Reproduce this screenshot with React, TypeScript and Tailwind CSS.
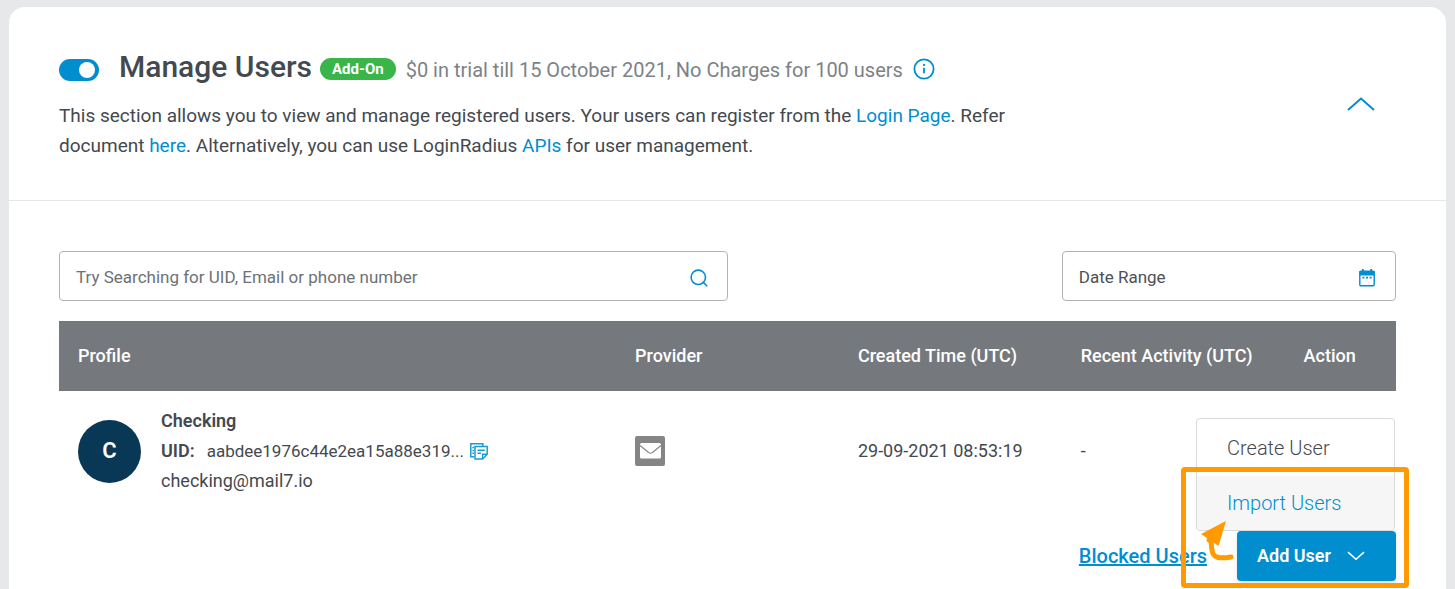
import React from "react";

function InfoIcon() {
  return (
    <svg width="22" height="22" viewBox="0 0 22 22" fill="none" aria-hidden="true">
      <circle cx="11" cy="11" r="9.6" stroke="#008ecf" strokeWidth="1.8" />
      <path d="M11 9.8v5.4" stroke="#008ecf" strokeWidth="1.8" />
      <circle cx="11" cy="6.9" r="1.1" fill="#008ecf" />
    </svg>
  );
}

function SearchIcon() {
  return (
    <svg width="18" height="18" viewBox="0 0 18 18" fill="none" stroke="#008ecf" strokeWidth="1.6" aria-hidden="true">
      <circle cx="8.3" cy="8.3" r="7.2" />
      <path d="M12.8 12.8l4.4 4.4" />
    </svg>
  );
}

function CalendarIcon() {
  return (
    <svg width="16" height="18" viewBox="0 0 16 18" fill="none" aria-hidden="true">
      <rect x="0.8" y="2.3" width="14.4" height="14.4" rx="1" stroke="#008ecf" strokeWidth="1.4" />
      <path d="M0.5 2h15v4.5H.5z" fill="#008ecf" />
      <path d="M3.8 0v3M12.2 0v3" stroke="#008ecf" strokeWidth="1.8" />
      <path d="M3.4 8.7h2M7 8.7h2M10.6 8.7h2" stroke="#008ecf" strokeWidth="1.8" />
    </svg>
  );
}

function CopyIcon() {
  return (
    <svg width="18" height="17" viewBox="0 0 18 17" fill="none" stroke="#1b9cd8" strokeWidth="1.5" aria-hidden="true">
      <path d="M4.5 13.8H.8V.8h12v2.4" />
      <path d="M2.4 4.5h1.6M2.4 7.4h1.6M2.4 10.3h1.6" />
      <path d="M5 3.6h12.2v7.6l-4.6 4.8H5z" />
      <path d="M17 11.2h-4.4V16" />
      <path d="M7.5 7.2h7.3M7.5 10.2h3.5" />
    </svg>
  );
}

function MailIcon() {
  return (
    <svg width="30" height="30" viewBox="0 0 30 30" role="img" aria-label="Email">
      <rect width="30" height="30" rx="2" fill="#858585" />
      <rect x="5" y="7" width="21" height="15.5" rx="1.5" fill="#fff" />
      <path d="M5 9.5l8.6 7q1.9 1.4 3.8 0l8.6-7" fill="none" stroke="#858585" strokeWidth="1.1" />
    </svg>
  );
}

function PageHeader() {
  return (
    <header className="flex justify-between border-b border-[#e6e7e8] px-[50px] pt-10 pb-[39px]">
      <div className="max-w-[980px]">
        <div className="flex items-center">
          <input
            type="checkbox"
            role="switch"
            defaultChecked
            aria-label="Enable Manage Users"
            className="mt-1.5 h-[22px] w-10 shrink-0 appearance-none rounded-full bg-gray-400 before:mt-[3px] before:ml-1 before:block before:size-4 before:rounded-full before:bg-white checked:bg-[#008ecf] checked:before:ml-5"
          />
          <h1 className="ml-5 text-[30px] leading-10 font-medium">Manage Users</h1>
          <span className="mt-1 ml-2 rounded-full bg-[#39b54a] px-3 text-[15px] leading-[22px] font-bold text-white">Add-On</span>
          <span className="mt-1.5 ml-2.5 text-[20px] leading-6 text-[#7d8287]">
            $0 in trial till 15 October 2021, No Charges for 100 users
          </span>
          <button type="button" aria-label="Pricing information" className="mt-1 ml-2.5">
            <InfoIcon />
          </button>
        </div>
        <p className="mt-[14px] text-[19px] leading-[30px]">
          This section allows you to view and manage registered users. Your users can register from the{" "}
          <a href="#login" className="text-[#008ecf]">Login Page</a>. Refer document{" "}
          <a href="#docs" className="text-[#008ecf]">here</a>. Alternatively, you can use LoginRadius{" "}
          <a href="#apis" className="text-[#008ecf]">APIs</a> for user management.
        </p>
      </div>
      <button type="button" aria-label="Collapse section" className="mr-5 self-center">
        <svg width="30" height="16" viewBox="0 0 30 16" fill="none" aria-hidden="true">
          <path d="M2 14L15 2.5L28 14" stroke="#008ecf" strokeWidth="2" />
        </svg>
      </button>
    </header>
  );
}

function Filters() {
  return (
    <div className="flex justify-between">
      <label className="flex h-[50px] w-1/2 items-center rounded border border-[#b1b4b6] pt-1 pr-[19px] pl-4">
        <input
          type="search"
          aria-label="Search users"
          placeholder="Try Searching for UID, Email or phone number"
          className="min-w-0 flex-1 text-[17px] outline-none placeholder:text-[#6c7277]"
        />
        <SearchIcon />
      </label>
      <label className="flex h-[50px] w-1/4 items-center rounded border border-[#b1b4b6] pt-1 pr-5 pl-4">
        <input
          type="text"
          aria-label="Date range"
          placeholder="Date Range"
          className="min-w-0 flex-1 text-[17px] outline-none placeholder:text-[#4b5157]"
        />
        <CalendarIcon />
      </label>
    </div>
  );
}

function UsersTable() {
  return (
    <table className="mt-5 w-full table-fixed text-left">
      <thead className="bg-[#75797d] text-lg text-white">
        <tr className="h-[70px]">
          <th className="w-5/12 px-[19px] font-medium">Profile</th>
          <th className="w-2/12 px-[19px] font-medium">Provider</th>
          <th className="w-2/12 px-[19px] font-medium">Created Time (UTC)</th>
          <th className="w-2/12 pl-[19px] font-medium whitespace-nowrap">Recent Activity (UTC)</th>
          <th className="w-1/12 px-[19px] font-medium">Action</th>
        </tr>
      </thead>
      <tbody className="text-lg">
        <tr className="h-[120px]">
          <td className="px-[19px]">
            <div className="flex items-center gap-5">
              <div className="flex size-[63px] shrink-0 items-center justify-center rounded-full bg-[#093857] text-[22px] font-semibold text-white">
                C
              </div>
              <div className="min-w-0 leading-[30px]">
                <div className="font-semibold">Checking</div>
                <div className="flex items-center">
                  <span className="font-semibold">UID:</span>
                  <span className="ml-3 text-[17px]">aabdee1976c44e2ea15a88e319...</span>
                  <button type="button" aria-label="Copy UID" className="ml-1.5">
                    <CopyIcon />
                  </button>
                </div>
                <div>checking@mail7.io</div>
              </div>
            </div>
          </td>
          <td className="px-[19px]">
            <MailIcon />
          </td>
          <td className="pl-[19px] whitespace-nowrap">29-09-2021 08:53:19</td>
          <td className="px-[19px]">-</td>
          <td />
        </tr>
      </tbody>
    </table>
  );
}

function AddUserMenu() {
  return (
    <div className="relative">
      <div role="menu" className="absolute right-px bottom-full flex w-[199px] flex-col rounded border border-[#d9dadb] bg-white text-[20px] font-light">
        <button type="button" role="menuitem" className="h-[57px] pl-[30px] text-left">Create User</button>
        <button type="button" role="menuitem" className="h-[54px] rounded-b bg-[#f6f6f6] pl-[30px] text-left text-[#008ecf]">
          Import Users
        </button>
      </div>
      <button type="button" className="flex h-[50px] w-[159px] items-center gap-4 rounded bg-[#008ecf] pl-5 text-lg font-semibold text-white shadow-md">
        Add User
        <svg width="18" height="10" viewBox="0 0 18 10" fill="none" aria-hidden="true">
          <path d="M1 1.2L9 8.3L17 1.2" stroke="#fff" strokeWidth="1.6" />
        </svg>
      </button>
      <div className="pointer-events-none absolute -top-16 -right-[13px] -bottom-[7px] -left-14 rounded-sm border-[5px] border-[#ff9a00]" />
      <svg className="pointer-events-none absolute -top-[10px] -left-9" width="34" height="40" viewBox="0 0 34 40" aria-hidden="true">
        <path d="M8 19C11 20 10 24 11 29C12 37 18 38 30 36" fill="none" stroke="#ff9a00" strokeWidth="5" strokeLinecap="round" />
        <path d="M25 0L0 13L17.5 25Z" fill="#ff9a00" />
      </svg>
    </div>
  );
}

export default function App() {
  return (
    <div className="flex min-h-screen flex-col bg-[#e7e8ea] px-[9px] pt-[7px] font-[Roboto,sans-serif] text-[#43494f]">
      <main className="flex-1 rounded-t-2xl bg-white">
        <PageHeader />
        <section className="px-[50px] pt-[50px] pb-2">
          <Filters />
          <UsersTable />
          <div className="mt-5 flex items-center justify-end gap-[30px]">
            <a href="#blocked" className="text-[20px] font-medium text-[#008ecf] underline">Blocked Users</a>
            <AddUserMenu />
          </div>
        </section>
      </main>
    </div>
  );
}
